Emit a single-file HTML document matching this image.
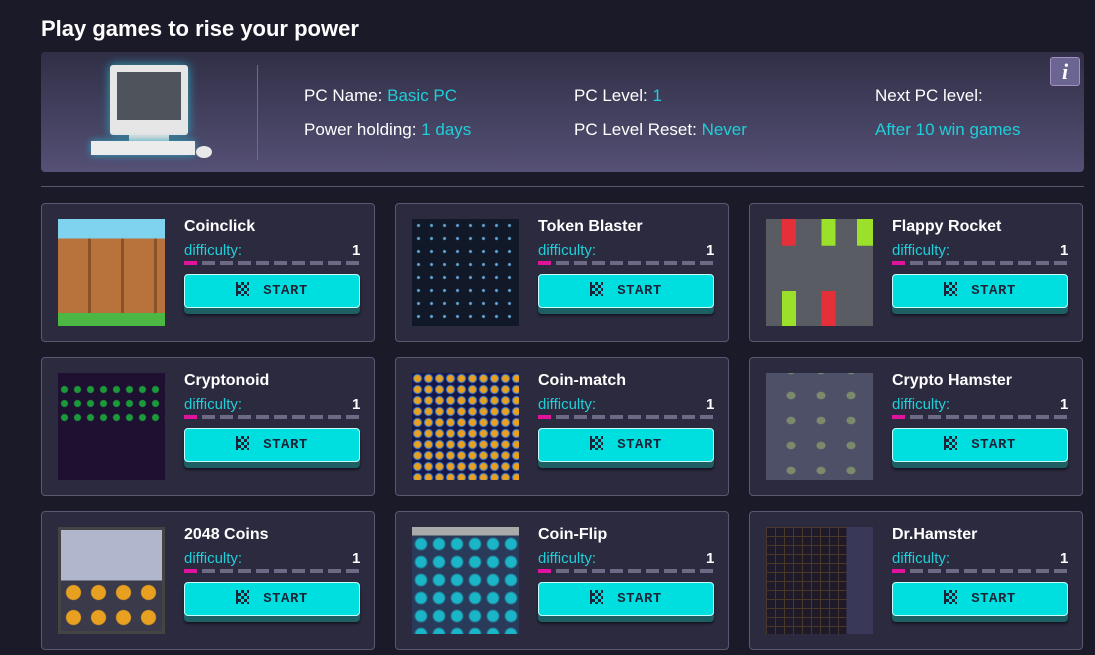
<!DOCTYPE html>
<html><head><meta charset="utf-8"><style>
*{box-sizing:border-box;margin:0;padding:0}
body{width:1095px;height:655px;overflow:hidden;background:#1b1a29;font-family:"Liberation Sans",sans-serif;color:#fff;position:relative}
h1{position:absolute;left:41px;top:16px;font-size:22px;font-weight:bold}
.panel{position:absolute;left:41px;top:52px;width:1043px;height:120px;border-radius:4px;background:linear-gradient(180deg,#302f46,#555075)}
.vline{position:absolute;left:216px;top:13px;width:1px;height:95px;background:#6e6a8e}
.lbl{position:absolute;font-size:17px;color:#fff;white-space:nowrap}
.c{color:#1ecfd9}
.info{position:absolute;left:1009px;top:5px;width:30px;height:29px;background:#6b6591;border:1px solid #a68fc7;border-radius:3px;font:bold italic 22px "Liberation Serif",serif;text-align:center;line-height:27px}
.hr{position:absolute;left:41px;top:186px;width:1043px;height:1px;background:#57566a}
.card{position:absolute;width:334px;height:139px;background:#2b2a3f;border:1px solid #595870;border-radius:4px}
.img{position:absolute;left:16px;top:15px;width:107px;height:107px}
.t{position:absolute;left:142px;top:14px;font-size:16px;font-weight:bold}
.d{position:absolute;left:142px;top:38px;font-size:15px;color:#1ecfd9}
.n{position:absolute;left:310px;top:38px;font-size:15px;font-weight:bold}
.bars{position:absolute;left:142px;top:57px;width:176px;height:4px;background:repeating-linear-gradient(90deg,#6d6a86 0 13px,transparent 13px 18px)}
.bars:before{content:"";position:absolute;left:0;top:0;width:13px;height:4px;background:#e0139f}
.btn{position:absolute;left:142px;top:70px;width:176px;height:40px;border-radius:4px;background:#1e5f63;box-shadow:0 2px 2px #161522}
.btn div{height:34px;background:#00dfe0;border:1px solid #c8fbfb;border-radius:4px;text-align:center;font:bold 14px "Liberation Mono",monospace;color:#1d2438;line-height:32px;letter-spacing:.5px}
.flag{display:inline-block;width:13px;height:14px;vertical-align:-2px;margin-right:14px;background:conic-gradient(#1d2438 25%,transparent 0 50%,#1d2438 0 75%,transparent 0) 0 0/6px 6px;border-left:2px solid #1d2438}
</style></head><body>
<h1>Play games to rise your power</h1>
<div class="panel">
 <div style="position:absolute;left:69px;top:13px;width:78px;height:70px;background:#e6e6e6;border-radius:3px;box-shadow:0 0 10px #2aa8c0"><div style="margin:7px;height:48px;background:#4f545c"></div></div>
 <div style="position:absolute;left:88px;top:83px;width:40px;height:6px;background:#ddd"></div>
 <div style="position:absolute;left:50px;top:89px;width:104px;height:14px;background:#ececec;box-shadow:0 0 8px #2aa8c0"></div>
 <div style="position:absolute;left:155px;top:94px;width:16px;height:12px;border-radius:50%;background:#e8e8e8"></div>
 <div class="vline"></div>
 <div class="lbl" style="left:263px;top:34px">PC Name: <span class="c">Basic PC</span></div>
 <div class="lbl" style="left:263px;top:68px">Power holding: <span class="c">1 days</span></div>
 <div class="lbl" style="left:533px;top:34px">PC Level: <span class="c">1</span></div>
 <div class="lbl" style="left:533px;top:68px">PC Level Reset: <span class="c">Never</span></div>
 <div class="lbl" style="left:834px;top:34px">Next PC level:</div>
 <div class="lbl c" style="left:834px;top:68px">After 10 win games</div>
 <div class="info">i</div>
</div>
<div class="hr"></div>

<div class="card" style="left:41px;top:203px"><div class="img" style="background:linear-gradient(#7fd3ef 0 18%,transparent 18%),linear-gradient(transparent 88%,#4cb843 88%),repeating-linear-gradient(90deg,#b8733c 0 30px,#8a5228 30px 33px)"></div><div class="t">Coinclick</div><div class="d">difficulty:</div><div class="n">1</div><div class="bars"></div><div class="btn"><div><span class="flag"></span>START</div></div></div>
<div class="card" style="left:395px;top:203px"><div class="img" style="background:radial-gradient(#6ad 1px,transparent 2px) 0 0/13px 13px,#111828"></div><div class="t">Token Blaster</div><div class="d">difficulty:</div><div class="n">1</div><div class="bars"></div><div class="btn"><div><span class="flag"></span>START</div></div></div>
<div class="card" style="left:749px;top:203px"><div class="img" style="background:linear-gradient(90deg,transparent 15%,#e5303a 15% 28%,transparent 28% 52%,#9be02a 52% 65%,transparent 65% 85%,#9be02a 85%) top/100% 25% no-repeat,linear-gradient(90deg,transparent 15%,#9be02a 15% 28%,transparent 28% 52%,#e5303a 52% 65%,transparent 65%) bottom/100% 33% no-repeat,#5a5c63"></div><div class="t">Flappy Rocket</div><div class="d">difficulty:</div><div class="n">1</div><div class="bars"></div><div class="btn"><div><span class="flag"></span>START</div></div></div>

<div class="card" style="left:41px;top:357px"><div class="img" style="background:radial-gradient(#1b9a3a 3px,transparent 4px) 0 10px/13px 13px repeat-x,radial-gradient(#1b9a3a 3px,transparent 4px) 0 24px/13px 13px repeat-x,radial-gradient(#1b9a3a 3px,transparent 4px) 0 38px/13px 13px repeat-x,#1e1030"></div><div class="t">Cryptonoid</div><div class="d">difficulty:</div><div class="n">1</div><div class="bars"></div><div class="btn"><div><span class="flag"></span>START</div></div></div>
<div class="card" style="left:395px;top:357px"><div class="img" style="background:radial-gradient(#e8a020 3px,#3a7ad0 4px,transparent 5px) 0 0/11px 11px,#16184a"></div><div class="t">Coin-match</div><div class="d">difficulty:</div><div class="n">1</div><div class="bars"></div><div class="btn"><div><span class="flag"></span>START</div></div></div>
<div class="card" style="left:749px;top:357px"><div class="img" style="background:radial-gradient(#7a8a6a 4px,transparent 5px) 10px 10px/30px 25px,#4e5068"></div><div class="t">Crypto Hamster</div><div class="d">difficulty:</div><div class="n">1</div><div class="bars"></div><div class="btn"><div><span class="flag"></span>START</div></div></div>

<div class="card" style="left:41px;top:511px"><div class="img" style="background:linear-gradient(#b0b6cc 0 50%,transparent 50%),radial-gradient(#e8a020 7px,#3a3a4a 8px) 0 0/25px 25px,#8890aa;border:3px solid #444"></div><div class="t">2048 Coins</div><div class="d">difficulty:</div><div class="n">1</div><div class="bars"></div><div class="btn"><div><span class="flag"></span>START</div></div></div>
<div class="card" style="left:395px;top:511px"><div class="img" style="background:linear-gradient(#aaa 0 8%,transparent 8%),radial-gradient(#1ab6c8 5px,#2a3a5a 7px) 0 8px/18px 18px,#3a4a6a"></div><div class="t">Coin-Flip</div><div class="d">difficulty:</div><div class="n">1</div><div class="bars"></div><div class="btn"><div><span class="flag"></span>START</div></div></div>
<div class="card" style="left:749px;top:511px"><div class="img" style="background:linear-gradient(90deg,transparent 75%,#3a3858 75%),repeating-linear-gradient(90deg,#4a3828 0 1px,transparent 1px 9px),repeating-linear-gradient(#4a3828 0 1px,transparent 1px 9px),#1e1a2a"></div><div class="t">Dr.Hamster</div><div class="d">difficulty:</div><div class="n">1</div><div class="bars"></div><div class="btn"><div><span class="flag"></span>START</div></div></div>
</body></html>
